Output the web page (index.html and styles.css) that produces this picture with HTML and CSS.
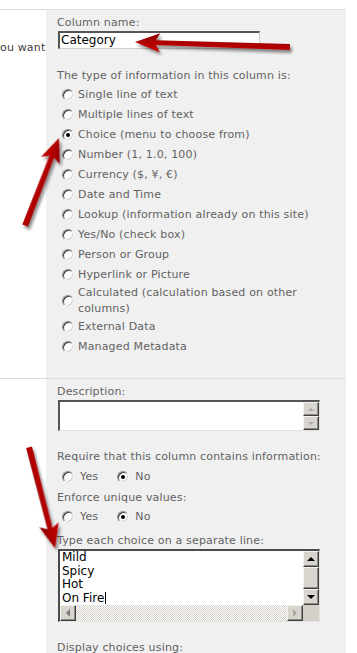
FILE: index.html
```html
<!DOCTYPE html>
<html>
<head>
<meta charset="utf-8">
<link rel="stylesheet" href="styles.css">
</head>
<body>
<div class="page">
  <section class="row row1">
    <div class="side"><span class="side-text">ou want</span></div>
    <div class="panel">
      <div class="label">Column name:</div>
      <div class="input">Category</div>
      <div class="label gap-type">The type of information in this column is:</div>
      <ul class="options">
        <li><span class="radio"></span><span>Single line of text</span></li>
        <li><span class="radio"></span><span>Multiple lines of text</span></li>
        <li><span class="radio on"></span><span>Choice (menu to choose from)</span></li>
        <li><span class="radio"></span><span>Number (1, 1.0, 100)</span></li>
        <li><span class="radio"></span><span>Currency ($, ¥, €)</span></li>
        <li><span class="radio"></span><span>Date and Time</span></li>
        <li><span class="radio"></span><span>Lookup (information already on this site)</span></li>
        <li><span class="radio"></span><span>Yes/No (check box)</span></li>
        <li><span class="radio"></span><span>Person or Group</span></li>
        <li><span class="radio"></span><span>Hyperlink or Picture</span></li>
        <li class="two"><span class="radio"></span><span>Calculated (calculation based on other<br>columns)</span></li>
        <li><span class="radio"></span><span>External Data</span></li>
        <li><span class="radio"></span><span>Managed Metadata</span></li>
      </ul>
    </div>
  </section>

  <section class="row row2">
    <div class="side"></div>
    <div class="panel panel2">
      <div class="label">Description:</div>
      <div class="desc-box">
        <div class="desc-text"></div>
        <div class="desc-scroll">
          <div class="sbtn"><span class="tri up dis"></span></div>
          <div class="sbtn"><span class="tri down dis"></span></div>
        </div>
      </div>
      <div class="label gap-req">Require that this column contains information:</div>
      <div class="yesno gap-yn1">
        <span class="radio"></span><span class="yn-text">Yes</span>
        <span class="radio on"></span><span class="yn-text">No</span>
      </div>
      <div class="label gap-enf">Enforce unique values:</div>
      <div class="yesno gap-yn2">
        <span class="radio"></span><span class="yn-text">Yes</span>
        <span class="radio on"></span><span class="yn-text">No</span>
      </div>
      <div class="label gap-choice">Type each choice on a separate line:</div>
      <div class="choice-box">
        <div class="choice-text">
          <div>Mild</div>
          <div>Spicy</div>
          <div>Hot</div>
          <div>On Fire<span class="caret"></span></div>
        </div>
        <div class="vbar">
          <div class="sbtn big"><span class="tri up"></span></div>
          <div class="sbtn thumb"></div>
          <div class="sbtn big"><span class="tri down"></span></div>
        </div>
        <div class="hbar">
          <div class="sbtn big"><span class="tri left"></span></div>
          <div class="track"></div>
          <div class="sbtn big"><span class="tri right dis"></span></div>
        </div>
        <div class="corner"></div>
      </div>
      <div class="label gap-display">Display choices using:</div>
    </div>
  </section>

  <svg class="arrows" width="357" height="653" viewBox="0 0 357 653">
    <defs>
      <filter id="sh" x="-20%" y="-20%" width="140%" height="140%">
        <feDropShadow dx="2" dy="3" stdDeviation="1.6" flood-color="#000" flood-opacity="0.45"/>
      </filter>
      <linearGradient id="rg" x1="0" y1="0" x2="0" y2="1">
        <stop offset="0" stop-color="#c40000"/>
        <stop offset="0.5" stop-color="#b00000"/>
        <stop offset="1" stop-color="#8c0000"/>
      </linearGradient>
    </defs>
    <g filter="url(#sh)" fill="url(#rg)">
      <path transform="translate(135 42) rotate(-178.15)" d="M0,0 L-25,-9.5 L-21,-2.4 L-155,-3 L-155,3 L-21,2.4 L-25,9.5 Z"/>
      <path transform="translate(59 138) rotate(-68.87)" d="M0,0 L-24,-10 L-20,-2.5 L-94,-3 L-94,3 L-20,2.5 L-24,10 Z"/>
      <path transform="translate(55 548) rotate(75.56)" d="M0,0 L-24,-10 L-20,-2.5 L-104,-3 L-104,3 L-20,2.5 L-24,10 Z"/>
    </g>
  </svg>
</div>
</body>
</html>
```

FILE: styles.css
```css
* { box-sizing: border-box; }
html, body { margin: 0; padding: 0; background: #fff; }
body {
  font-family: "DejaVu Sans", Verdana, sans-serif;
  font-size: 11px;
  line-height: 14px;
  letter-spacing: 0.17px;
  color: #626262;
}
.page { position: relative; width: 357px; height: 653px; overflow: hidden; padding-top: 9px; }

.row { display: flex; width: 346px; border-top: 1px solid #dcdcdc; }
.side { width: 46px; flex: none; }
.side-text { display: block; padding-top: 31px; color: #3c3c3c; white-space: nowrap; }
.panel { width: 300px; background: #f0f0f0; padding: 6px 8px 21px 11px; }
.row2 { height: 275px; }
.panel2 { padding-bottom: 0; }

.label { white-space: nowrap; }
.input {
  margin: 1px 0 0 1px;
  width: 202px;
  height: 18px;
  background: #fff;
  border-top: 2px solid #555;
  border-left: 2px solid #555;
  border-right: 1px solid #d4d0c8;
  border-bottom: 1px solid #d4d0c8;
  font-size: 12px;
  line-height: 14px;
  letter-spacing: 0;
  color: #000;
  padding-left: 1px;
}
.gap-type { margin-top: 20px; }

.options { list-style: none; margin: 2px 0 0; padding: 0; }
.options li { display: flex; align-items: center; gap: 4px; height: 20px; padding-left: 5px; white-space: nowrap; }
.options li.two { height: 32px; line-height: 16px; }

.radio {
  flex: none;
  position: relative;
  width: 12px;
  height: 12px;
  border-radius: 50%;
  background: #fff;
  border: 1px solid;
  border-color: #8a8a8a #f4f4f4 #f4f4f4 #8a8a8a;
  box-shadow: inset 1px 1px 0 #404040, inset -1px -1px 0 #d4d0c8;
}
.radio.on::after {
  content: "";
  position: absolute;
  left: 3px; top: 3px;
  width: 4px; height: 4px;
  border-radius: 50%;
  background: #000;
}

.desc-box {
  margin: 1px 0 0 1px;
  width: 262px;
  height: 31px;
  display: flex;
  background: #fff;
  border-top: 2px solid #555;
  border-left: 2px solid #555;
  border-right: 1px solid #e4e2dc;
  border-bottom: 1px solid #e4e2dc;
}
.desc-text { flex: 1; }
.desc-scroll { width: 16px; display: flex; flex-direction: column; }
.desc-scroll .sbtn { height: 14px; }

.sbtn {
  position: relative;
  display: flex;
  align-items: center;
  justify-content: center;
  background: #d8d5ce;
  border: 1px solid;
  border-color: #f4f3f0 #404040 #404040 #f4f3f0;
  box-shadow: inset -1px -1px 0 #8c8a84;
}
.sbtn.big { height: 16px; width: 16px; }
.sbtn.thumb { height: 22px; }

.tri { width: 0; height: 0; border-style: solid; }
.tri.up { border-width: 0 4px 4px 4px; border-color: transparent transparent #000 transparent; }
.tri.down { border-width: 4px 4px 0 4px; border-color: #000 transparent transparent transparent; }
.tri.left { border-width: 4px 4px 4px 0; border-color: transparent #7a7a7a transparent transparent; }
.tri.right { border-width: 4px 0 4px 4px; border-color: transparent transparent transparent #000; }
.tri.up.dis { border-width: 0 3px 3px 3px; border-color: transparent transparent #a8a8a8 transparent; }
.tri.down.dis { border-width: 3px 3px 0 3px; border-color: #a8a8a8 transparent transparent transparent; }
.tri.right.dis { border-color: transparent transparent transparent #aaa8a2; }

.gap-req { margin-top: 19px; }
.yesno { display: flex; align-items: center; height: 20px; padding-left: 5px; }
.yn-text { margin-left: 6px; margin-right: 19px; }
.gap-yn1 { margin-top: 3px; }
.gap-enf { margin-top: 4px; }
.gap-yn2 { margin-top: 2px; }
.gap-choice { margin-top: 7px; }

.choice-box {
  margin: 1px 0 0 1px;
  width: 262px;
  height: 73px;
  display: grid;
  grid-template-columns: 1fr 16px;
  grid-template-rows: 54px 16px;
  background: #fff;
  border-top: 2px solid #4a4a4a;
  border-left: 2px solid #4a4a4a;
  border-right: 1px solid #e4e2dc;
  border-bottom: 1px solid #e4e2dc;
}
.choice-text { padding-left: 2px; font-size: 12px; line-height: 13.5px; letter-spacing: 0; color: #000; overflow: hidden; }
.caret { display: inline-block; width: 1px; height: 12px; background: #000; vertical-align: -2px; margin-left: 1px; }
.vbar { display: flex; flex-direction: column; }
.hbar { display: flex; }
.track {
  flex: 1;
  background-color: #fff;
  background-image: repeating-conic-gradient(#d4d0c8 0 25%, #fff 0 50%);
  background-size: 2px 2px;
}
.corner { background: #d4d0c8; }
.gap-display { margin-top: 19px; }

.arrows { position: absolute; left: 0; top: 0; pointer-events: none; }
```
